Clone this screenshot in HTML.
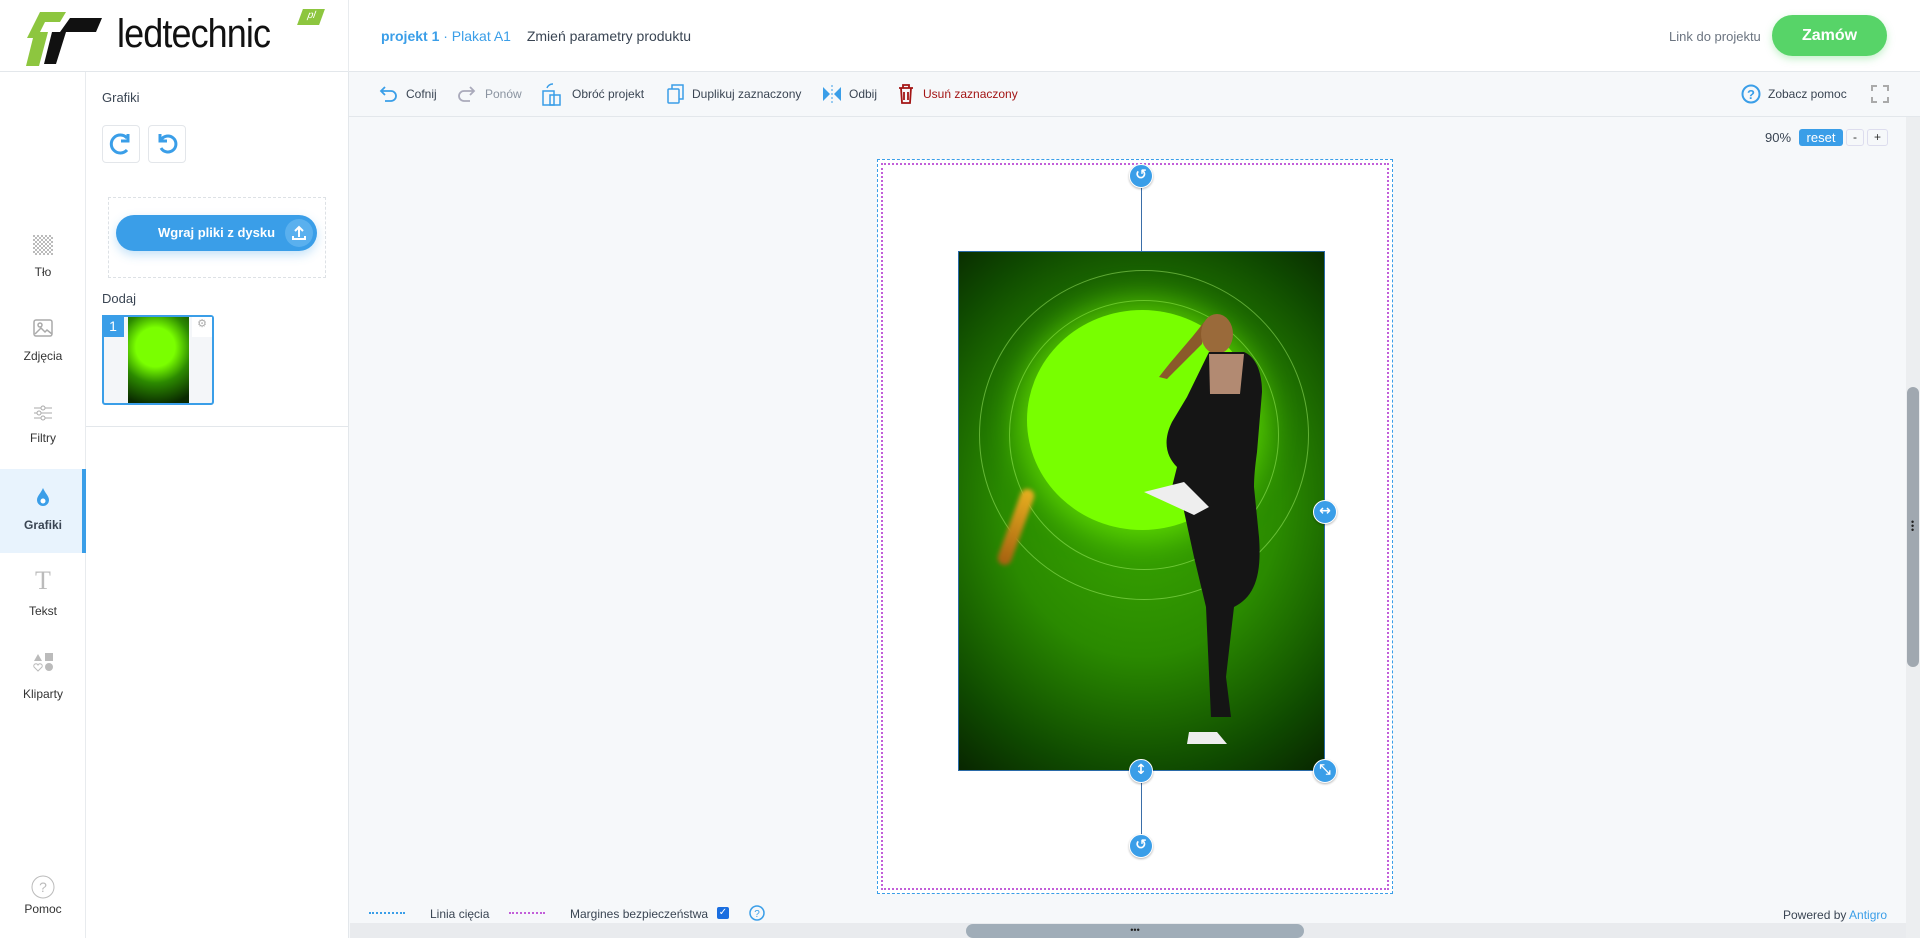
<!DOCTYPE html>
<html><head><meta charset="utf-8">
<style>
*{box-sizing:border-box;margin:0;padding:0}
body{width:1920px;height:938px;overflow:hidden;font-family:"Liberation Sans",sans-serif;background:#f6f8fa;position:relative;color:#333}
.abs{position:absolute}
.hdr{left:0;top:0;width:1920px;height:72px;background:#fff;border-bottom:1px solid #e3e7eb}
.logo{left:0;top:0;width:349px;height:72px;border-right:1px solid #e8ebee}
.rail{left:0;top:72px;width:86px;height:866px;background:#fff;border-right:1px solid #e8ebee}
.panel{left:86px;top:72px;width:263px;height:866px;background:#fff;border-right:1px solid #e3e7eb}
.tb{left:349px;top:72px;width:1571px;height:45px;border-bottom:1px solid #e3e7eb;background:#f6f8fa;font-size:12px;color:#3a4553}
.tb span{position:absolute;top:15px}
.ri{position:absolute;width:86px;text-align:center;font-size:12px;color:#333}
.btn{position:absolute;width:38px;height:38px;border:1px solid #e3e6ea;border-radius:4px;background:#fff}
.h{position:absolute;width:24px;height:24px;border-radius:50%;background:#3a9ee8;border:1px solid #fff;box-shadow:0 1px 2px rgba(0,0,0,.3);color:#fff;font-size:14px;font-weight:bold;text-align:center;line-height:21px;font-family:"DejaVu Sans",sans-serif}
</style></head><body>

<div class="abs hdr"></div>
<div class="abs logo">
<svg class="abs" style="left:26px;top:10px" width="78" height="56" viewBox="0 0 78 56"><path d="M14 2h26l-6 10H19l-5 10h8l-9 34H0l7-28h-6z" fill="#8dc63f"/><path d="M22 22h48l6-14H44l-10 14" fill="#111"/><path d="M26 22h14l-10 32h-12z" fill="#111"/></svg>
<div class="abs" style="left:117px;top:12px;font-size:40px;color:#111;letter-spacing:-1px;transform:scaleX(.9);transform-origin:left">ledtechnic</div>
<div class="abs" style="left:300px;top:9px;width:22px;height:16px;background:#8dc63f;transform:skewX(-20deg);color:#fff;font-size:10px;text-align:center;line-height:14px">pl</div>
</div>
<div class="abs" style="left:381px;top:28px;font-size:14px;color:#3a9ee8"><b>projekt 1</b> · Plakat A1 <span style="color:#3a4553;margin-left:12px">Zmień parametry produktu</span></div>
<div class="abs" style="left:1669px;top:29px;font-size:13px;color:#6b7480">Link do projektu</div>
<div class="abs" style="left:1772px;top:15px;width:115px;height:41px;border-radius:21px;background:#57d468;color:#fff;font-weight:bold;font-size:16px;text-align:center;line-height:41px;box-shadow:0 3px 8px rgba(87,212,104,.35)">Zamów</div>

<div class="abs rail">
<div class="abs" style="left:0;top:397px;width:86px;height:84px;background:#e8f3fd;border-right:4px solid #3a9ee8"></div>
<svg class="abs" style="left:33px;top:163px" width="20" height="20"><defs><pattern id="ck" width="4" height="4" patternUnits="userSpaceOnUse"><rect width="2" height="2" fill="#bbb"/><rect x="2" y="2" width="2" height="2" fill="#bbb"/></pattern></defs><rect width="20" height="20" fill="url(#ck)"/></svg>
<div class="ri" style="top:193px">Tło</div>
<svg class="abs" style="left:33px;top:247px" width="20" height="18" fill="none" stroke="#aaa" stroke-width="1.5"><rect x="1" y="1" width="18" height="16" rx="2"/><circle cx="7" cy="6" r="2"/><path d="M2 15l6-6 4 4 2-2 5 4"/></svg>
<div class="ri" style="top:277px">Zdjęcia</div>
<svg class="abs" style="left:33px;top:333px" width="20" height="16" stroke="#aaa" fill="#fff"><path d="M1 3h18M1 8h18M1 13h18"/><circle cx="10" cy="3" r="2"/><circle cx="6" cy="8" r="2"/><circle cx="10" cy="13" r="2"/></svg>
<div class="ri" style="top:359px">Filtry</div>
<svg class="abs" style="left:35px;top:415px" width="16" height="20"><path d="M8 1C6 6 2 9 2 13a6 6 0 0012 0C14 9 10 6 8 1z" fill="#3a9ee8"/><circle cx="8" cy="14" r="2.5" fill="#fff"/></svg>
<div class="ri" style="top:446px;font-weight:bold;color:#3a4553">Grafiki</div>
<div class="ri" style="top:494px;font-family:'Liberation Serif',serif;font-size:26px;color:#bbb">T</div>
<div class="ri" style="top:532px">Tekst</div>
<svg class="abs" style="left:33px;top:580px" width="22" height="20" fill="#bbb"><path d="M1 9l4-7 4 7z"/><rect x="12" y="1" width="8" height="8"/><path d="M5 19l-4-4a2 2 0 014-2 2 2 0 014 2z" fill="none" stroke="#bbb"/><circle cx="16" cy="15" r="4"/></svg>
<div class="ri" style="top:615px">Kliparty</div>
<svg class="abs" style="left:31px;top:803px" width="24" height="24"><circle cx="12" cy="12" r="11" fill="none" stroke="#bbb"/><text x="12" y="17" text-anchor="middle" font-size="14" fill="#bbb" font-family="Liberation Sans">?</text></svg>
<div class="ri" style="top:830px">Pomoc</div>
</div>

<div class="abs panel">
<div class="abs" style="left:16px;top:18px;font-size:13px;color:#3a4553">Grafiki</div>
<div class="btn" style="left:16px;top:53px"><svg width="36" height="36"><path d="M24 12a9 9 0 100 12" fill="none" stroke="#3a9ee8" stroke-width="3"/><path d="M25 8v7h-7" fill="none" stroke="#3a9ee8" stroke-width="3"/></svg></div>
<div class="btn" style="left:62px;top:53px"><svg width="36" height="36"><path d="M12 14a8 8 0 110 8" fill="none" stroke="#3a9ee8" stroke-width="3"/><path d="M11 8v7h7" fill="none" stroke="#3a9ee8" stroke-width="3"/></svg></div>
<div class="abs" style="left:22px;top:125px;width:218px;height:81px;border:1px dashed #dde1e5"></div>
<div class="abs" style="left:30px;top:143px;width:201px;height:36px;border-radius:18px;background:#3a9ee8;color:#fff;font-weight:bold;font-size:13px;line-height:36px;padding-left:42px;box-shadow:0 4px 10px rgba(58,158,232,.3)">Wgraj pliki z dysku</div>
<div class="abs" style="left:199px;top:147px;width:28px;height:28px;border-radius:50%;background:#5ab0ee"><svg width="28" height="28" stroke="#fff" stroke-width="2" fill="none"><path d="M14 18V8M10 12l4-4 4 4M8 17v3h12v-3"/></svg></div>
<div class="abs" style="left:16px;top:219px;font-size:13px;color:#3a4553">Dodaj</div>
<div class="abs" style="left:16px;top:243px;width:112px;height:90px;border:2px solid #3a9ee8;border-radius:3px;background:#f4f6f9"></div>
<div class="abs" style="left:42px;top:245px;width:61px;height:86px;background:radial-gradient(circle at 45% 35%,#7aff00 0 30%,#2c8a00 55%,#0a2a00 90%)"></div>
<div class="abs" style="left:16px;top:243px;width:22px;height:22px;background:#3a9ee8;color:#fff;font-size:14px;text-align:center;line-height:22px">1</div>
<div class="abs" style="left:106px;top:245px;width:20px;height:20px;background:#fff;color:#aaa;font-size:11px;text-align:center">⚙</div>
<div class="abs" style="left:0;top:354px;width:263px;height:1px;background:#e3e7eb"></div>
</div>

<div class="abs tb">
<svg class="abs" style="left:30px;top:14px" width="18" height="16" fill="none" stroke="#3a9ee8" stroke-width="1.8"><path d="M2 5h10a5 5 0 010 10H6M6 1L2 5l4 4"/></svg><span style="left:57px">Cofnij</span>
<svg class="abs" style="left:109px;top:14px" width="18" height="16" fill="none" stroke="#aab" stroke-width="1.8"><path d="M16 5H6a5 5 0 000 10h6M12 1l4 4-4 4"/></svg><span style="left:136px;color:#8a93a0">Ponów</span>
<svg class="abs" style="left:193px;top:10px" width="20" height="24" fill="none" stroke="#3a9ee8" stroke-width="1.5"><rect x="1" y="9" width="11" height="14"/><rect x="8" y="13" width="10" height="10"/><path d="M5 6a6 6 0 016-4"/></svg><span style="left:223px">Obróć projekt</span>
<svg class="abs" style="left:318px;top:12px" width="18" height="20" fill="none" stroke="#3a9ee8" stroke-width="1.5"><rect x="1" y="5" width="11" height="14" rx="1"/><path d="M5 5V1h11v14h-4"/></svg><span style="left:343px">Duplikuj zaznaczony</span>
<svg class="abs" style="left:473px;top:13px" width="20" height="18" fill="#3a9ee8"><path d="M1 2l7 7-7 7zM19 2l-7 7 7 7z"/><path d="M10 0v18" stroke="#3a9ee8" stroke-dasharray="2 2"/></svg><span style="left:500px">Odbij</span>
<svg class="abs" style="left:549px;top:12px" width="16" height="20" fill="none" stroke="#a31515" stroke-width="1.8"><path d="M1 4h14M5 4V1h6v3M3 4l1 15h8l1-15M6 8v8M10 8v8"/></svg><span style="left:574px;color:#a31515">Usuń zaznaczony</span>
<svg class="abs" style="left:1392px;top:12px" width="20" height="20"><circle cx="10" cy="10" r="8.5" fill="none" stroke="#3a9ee8" stroke-width="2"/><text x="10" y="15" text-anchor="middle" font-size="13" font-weight="bold" fill="#3a9ee8" font-family="Liberation Sans">?</text></svg><span style="left:1419px">Zobacz pomoc</span>
<svg class="abs" style="left:1522px;top:13px" width="18" height="18" fill="none" stroke="#aaa" stroke-width="2"><path d="M1 6V1h5M12 1h5v5M17 12v5h-5M6 17H1v-5"/></svg>
</div>

<div class="abs" style="left:1765px;top:130px;font-size:13px;color:#3a4553">90%</div>
<div class="abs" style="left:1799px;top:129px;width:44px;height:17px;background:#3a9ee8;color:#fff;font-size:13px;border-radius:3px;text-align:center;line-height:17px">reset</div>
<div class="abs" style="left:1846px;top:129px;width:18px;height:17px;border:1px solid #dde;border-radius:3px;font-size:12px;text-align:center;line-height:15px">-</div>
<div class="abs" style="left:1867px;top:129px;width:21px;height:17px;border:1px solid #dde;border-radius:3px;font-size:12px;text-align:center;line-height:15px">+</div>

<!-- canvas -->
<div class="abs" style="left:877px;top:159px;width:516px;height:735px;background:#fff;border:1px dashed #3a9ee8"></div>
<div class="abs" style="left:881px;top:163px;width:508px;height:727px;border:2px dotted #c25fd9"></div>
<div class="abs" style="left:958px;top:251px;width:367px;height:520px;border:1px solid #2a6aa8;overflow:hidden;background:radial-gradient(ellipse 95% 75% at 50% 48%,#3aa800 0%,#2a8a00 40%,#0f4a00 70%,#020a00 100%)">
<div class="abs" style="left:20px;top:18px;width:330px;height:330px;border-radius:50%;border:1px solid rgba(180,255,120,.45)"></div>
<div class="abs" style="left:50px;top:48px;width:270px;height:270px;border-radius:50%;border:1px solid rgba(180,255,120,.45)"></div>
<div class="abs" style="left:68px;top:58px;width:230px;height:220px;border-radius:50%;background:#78ff00;box-shadow:0 0 30px 10px rgba(120,255,0,.55)"></div>
<div class="abs" style="left:50px;top:235px;width:14px;height:80px;border-radius:7px;background:linear-gradient(#e8b020,#a56010);transform:rotate(20deg);filter:blur(2px)"></div>
<svg class="abs" style="left:150px;top:40px" width="217" height="480">
<path d="M95 30c-15 20-30 35-45 55l8 2c15-15 25-25 35-35z" fill="#8a5a2a"/>
<ellipse cx="108" cy="42" rx="16" ry="20" fill="#9a6a3a"/>
<path d="M100 60h35c12 5 18 20 18 40l-5 60c-2 15-3 25-3 35l5 50c3 40-5 60-25 70l-8 70 5 40h-20l-5-110-12-50-12-55-30-10 20-5 5-20c-10-10-15-25-5-45l15-25z" fill="#151515"/>
<path d="M100 62h35l-4 40h-30z" fill="#d9a88a" opacity=".8"/>
<path d="M35 200l40-10 25 25-15 8z" fill="#eee"/>
<path d="M80 440h28l10 12h-40z" fill="#eee"/>
</svg>
</div>
<div class="abs" style="left:1141px;top:176px;width:1px;height:75px;background:#3a6ea8"></div>
<div class="abs" style="left:1141px;top:771px;width:1px;height:75px;background:#3a6ea8"></div>
<div class="h" style="left:1129px;top:164px">↺</div>
<div class="h" style="left:1129px;top:834px">↺</div>
<div class="h" style="left:1313px;top:500px">↔</div>
<div class="h" style="left:1129px;top:759px">↕</div>
<div class="h" style="left:1313px;top:759px">⤡</div>

<!-- footer -->
<div class="abs" style="left:369px;top:912px;width:36px;border-top:2px dotted #3a9ee8"></div>
<div class="abs" style="left:430px;top:907px;font-size:12px;color:#3a4553">Linia cięcia</div>
<div class="abs" style="left:509px;top:912px;width:36px;border-top:2px dotted #c25fd9"></div>
<div class="abs" style="left:570px;top:907px;font-size:12px;color:#3a4553">Margines bezpieczeństwa</div>
<div class="abs" style="left:717px;top:907px;width:12px;height:12px;background:#1a6ee0;border-radius:2px;color:#fff;font-size:10px;line-height:12px;text-align:center">✓</div>
<svg class="abs" style="left:749px;top:905px" width="16" height="16"><circle cx="8" cy="8" r="7" fill="none" stroke="#3a9ee8" stroke-width="1.5"/><text x="8" y="12" text-anchor="middle" font-size="10" fill="#3a9ee8" font-family="Liberation Sans">?</text></svg>
<div class="abs" style="left:1783px;top:908px;font-size:12px;color:#3a4553">Powered by <span style="color:#3a9ee8">Antigro</span></div>
<div class="abs" style="left:350px;top:923px;width:1556px;height:15px;background:#e9ebee"></div>
<div class="abs" style="left:966px;top:924px;width:338px;height:14px;border-radius:7px;background:#a0adb8;color:#222;font-size:9px;text-align:center;line-height:12px">•••</div>
<div class="abs" style="left:1906px;top:117px;width:14px;height:821px;background:#eceef0"></div>
<div class="abs" style="left:1907px;top:387px;width:12px;height:280px;border-radius:6px;background:#a0a8b0"></div>
<div class="abs" style="left:1911px;top:520px;font-size:9px;color:#222;line-height:4px">•<br>•<br>•</div>
</body></html>
